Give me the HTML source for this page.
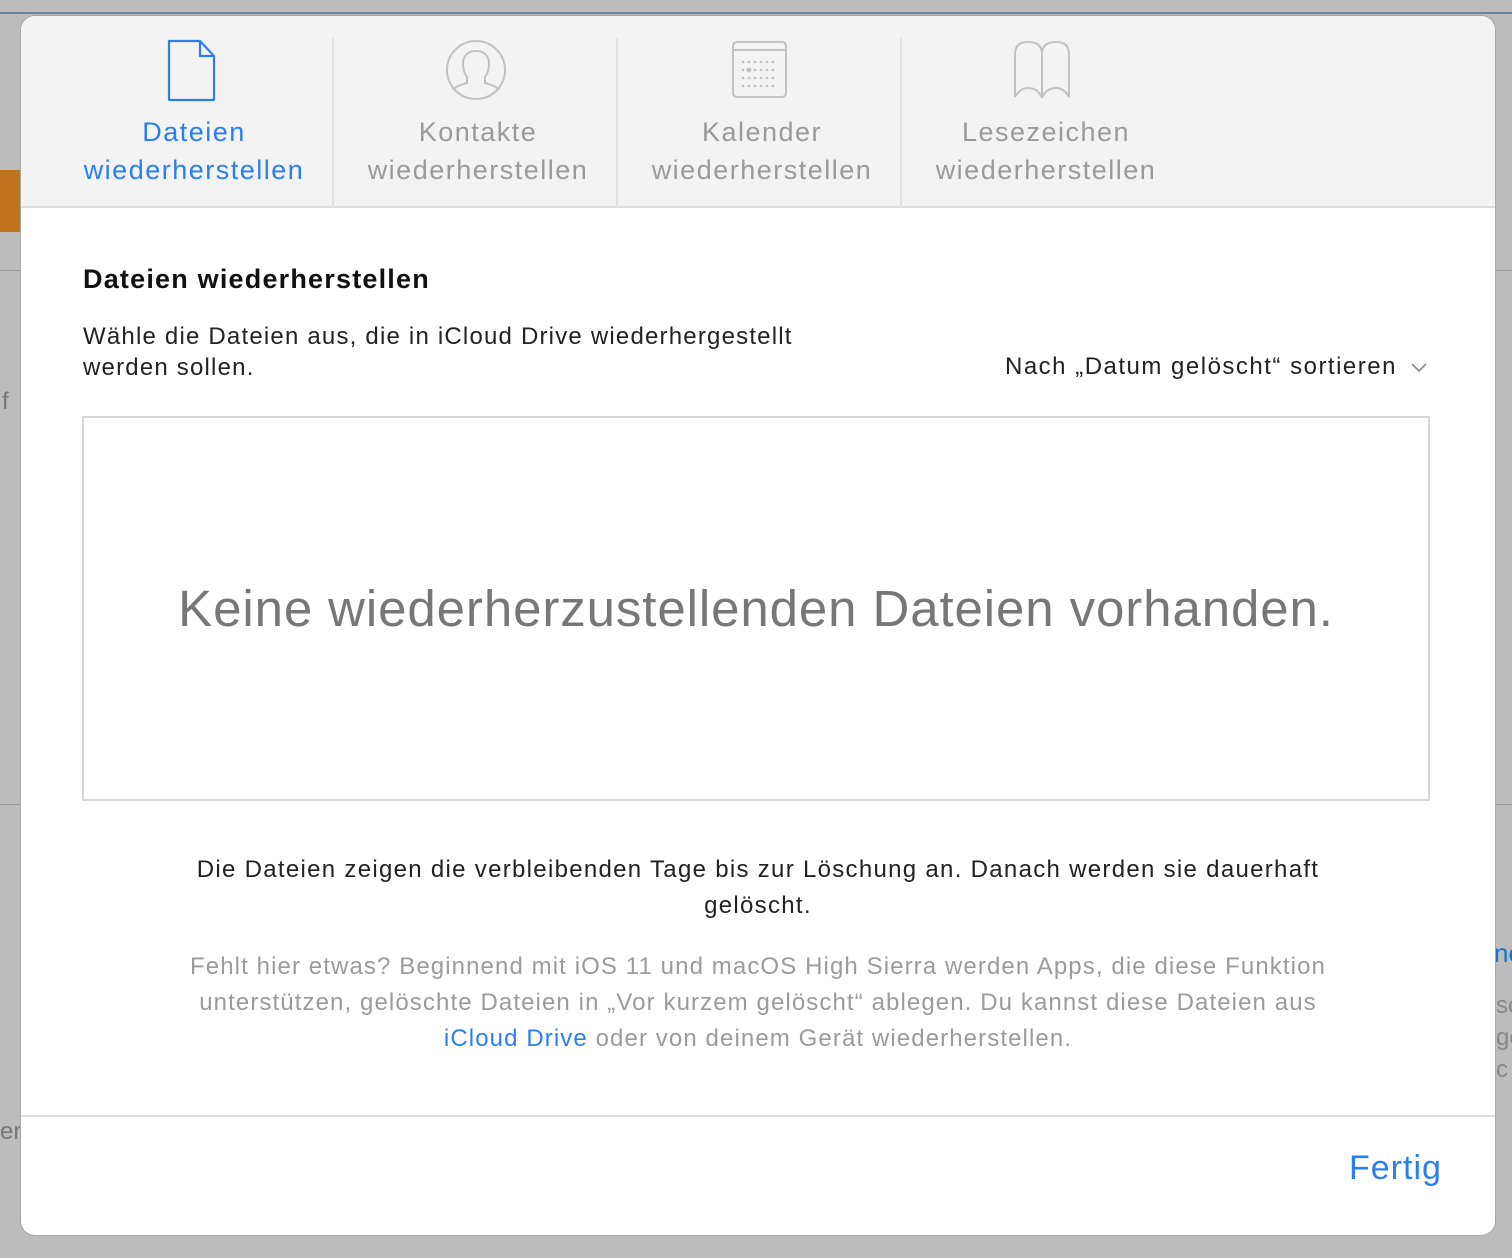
<!DOCTYPE html>
<html><head><meta charset="utf-8"><style>
*{margin:0;padding:0;box-sizing:border-box}
body{width:1512px;height:1258px;background:#bcbcbc;font-family:"Liberation Sans",sans-serif;position:relative;overflow:hidden}
.a{position:absolute;white-space:nowrap}
#modal{position:absolute;left:21px;top:16px;width:1474px;height:1219px;background:#fff;border-radius:14px;overflow:hidden;box-shadow:0 0 0 1px #a8a8a8}
#hdr{position:absolute;left:0;top:0;width:1474px;height:192px;background:#f3f3f3;border-bottom:2px solid #dcdcdc}
.div{position:absolute;top:22px;width:2px;height:170px;background:#e2e2e2}
.tab{position:absolute;top:97px;width:284px;text-align:center;font-size:27px;line-height:38px;color:#9a9a9a;letter-spacing:1.5px}
</style></head><body>
<div class="a" style="left:0;top:12px;width:1512px;height:2px;background:#6f8597"></div>
<div class="a" style="left:0;top:170px;width:22px;height:62px;background:#c0731f"></div>
<div class="a" style="left:0;top:270px;width:22px;height:1px;background:#999"></div>
<div class="a" style="left:0;top:804px;width:22px;height:1px;background:#999"></div>
<div class="a" style="left:1495px;top:270px;width:17px;height:1px;background:#999"></div>
<div class="a" style="left:1495px;top:804px;width:17px;height:1px;background:#999"></div>
<div class="a" style="left:2px;top:388px;font-size:24px;color:#777">f</div>
<div class="a" style="left:0;top:1118px;font-size:24px;color:#777">en</div>
<div class="a" style="left:1494px;top:938px;font-size:26px;color:#1a73c8">ne</div>
<div class="a" style="left:1496px;top:990px;font-size:24px;color:#888;line-height:32px">sc<br>ge<br>c</div>
<div id="modal">
 <div id="hdr">
  <div class="div" style="left:311px"></div>
  <div class="div" style="left:595px"></div>
  <div class="div" style="left:879px"></div>
  <svg class="a" style="left:145px;top:23px" width="50" height="64" viewBox="0 0 50 64"><path d="M3 2H34L48 17V60Q48 61 47 61H4Q3 61 3 60Z M34 2V17H48" fill="none" stroke="#2a7ef2" stroke-width="2.2" stroke-linejoin="round"/></svg>
  <svg class="a" style="left:424px;top:23px" width="62" height="62" viewBox="0 0 62 62"><ellipse cx="31" cy="31" rx="29" ry="29" fill="none" stroke="#c2c2c2" stroke-width="2"/><path d="M8 51Q12 46 22 44V38Q18 33 18 24Q19 12 31 12Q43 12 44 24Q44 33 40 38V44Q50 46 54 51" fill="none" stroke="#c2c2c2" stroke-width="2"/></svg>
  <svg class="a" style="left:709px;top:24px" width="58" height="60" viewBox="0 0 58 60"><rect x="3" y="2" width="53" height="55" rx="4" fill="none" stroke="#c2c2c2" stroke-width="2"/><line x1="3" y1="10" x2="56" y2="10" stroke="#c2c2c2" stroke-width="2"/><g fill="#c2c2c2"><circle cx="13" cy="22" r="1.3"/><circle cx="19" cy="22" r="1.3"/><circle cx="25" cy="22" r="1.3"/><circle cx="31" cy="22" r="1.3"/><circle cx="37" cy="22" r="1.3"/><circle cx="43" cy="22" r="1.3"/><circle cx="13" cy="30" r="1.3"/><circle cx="19" cy="30" r="2.5"/><circle cx="25" cy="30" r="1.3"/><circle cx="31" cy="30" r="1.3"/><circle cx="37" cy="30" r="1.3"/><circle cx="43" cy="30" r="1.3"/><circle cx="13" cy="38" r="1.3"/><circle cx="19" cy="38" r="1.3"/><circle cx="25" cy="38" r="1.3"/><circle cx="31" cy="38" r="1.3"/><circle cx="37" cy="38" r="1.3"/><circle cx="43" cy="38" r="1.3"/><circle cx="13" cy="46" r="1.3"/><circle cx="19" cy="46" r="1.3"/><circle cx="25" cy="46" r="1.3"/><circle cx="31" cy="46" r="1.3"/><circle cx="37" cy="46" r="1.3"/><circle cx="43" cy="46" r="1.3"/></g></svg>
  <svg class="a" style="left:991px;top:24px" width="62" height="60" viewBox="0 0 62 60"><path d="M3 57V14Q3 2 16 2Q30 2 30 14V58 M3 57Q8 48 16 48Q26 48 30 58 M57 57V14Q57 2 44 2Q30 2 30 14 M57 57Q52 48 44 48Q34 48 30 58" fill="none" stroke="#c2c2c2" stroke-width="2"/></svg>
  <div class="tab" style="left:31px;color:#2a7ef2">Dateien<br>wiederherstellen</div>
  <div class="tab" style="left:315px">Kontakte<br>wiederherstellen</div>
  <div class="tab" style="left:599px">Kalender<br>wiederherstellen</div>
  <div class="tab" style="left:883px">Lesezeichen<br>wiederherstellen</div>
 </div>
 <div class="a" style="left:62px;top:248px;font-size:27px;font-weight:bold;color:#111;letter-spacing:1.2px">Dateien wiederherstellen</div>
 <div class="a" style="left:62px;top:305px;font-size:24px;line-height:31px;color:#222;letter-spacing:1.2px">Wähle die Dateien aus, die in iCloud Drive wiederhergestellt<br>werden sollen.</div>
 <div class="a" style="left:984px;top:337px;font-size:24px;color:#222;letter-spacing:1.5px">Nach „Datum gelöscht“ sortieren</div>
 <svg class="a" style="left:1390px;top:345px" width="16" height="12" viewBox="0 0 16 12"><path d="M1 3L8 10L15 3" fill="none" stroke="#888" stroke-width="1.6"/></svg>
 <div class="a" style="left:61px;top:400px;width:1348px;height:385px;border:2px solid #d6d6d6"></div>
 <div class="a" style="left:61px;top:563px;width:1348px;text-align:center;font-size:51px;color:#777;letter-spacing:0.9px">Keine wiederherzustellenden Dateien vorhanden.</div>
 <div class="a" style="left:0;top:836px;width:1474px;text-align:center;font-size:24px;line-height:36px;color:#222;letter-spacing:1.3px">Die Dateien zeigen die verbleibenden Tage bis zur Löschung an. Danach werden sie dauerhaft<br>gelöscht.</div>
 <div class="a" style="left:0;top:933px;width:1474px;text-align:center;font-size:24px;line-height:36px;color:#9b9b9b;letter-spacing:1.1px">Fehlt hier etwas? Beginnend mit iOS 11 und macOS High Sierra werden Apps, die diese Funktion<br>unterstützen, gelöschte Dateien in „Vor kurzem gelöscht“ ablegen. Du kannst diese Dateien aus<br><span style="color:#2a7ef2">iCloud Drive</span> oder von deinem Gerät wiederherstellen.</div>
 <div class="a" style="left:0;top:1099px;width:1474px;height:2px;background:#dcdcdc"></div>
 <div class="a" style="left:1328px;top:1133px;font-size:34px;color:#2a7ef2;letter-spacing:1px">Fertig</div>
</div>
</body></html>
